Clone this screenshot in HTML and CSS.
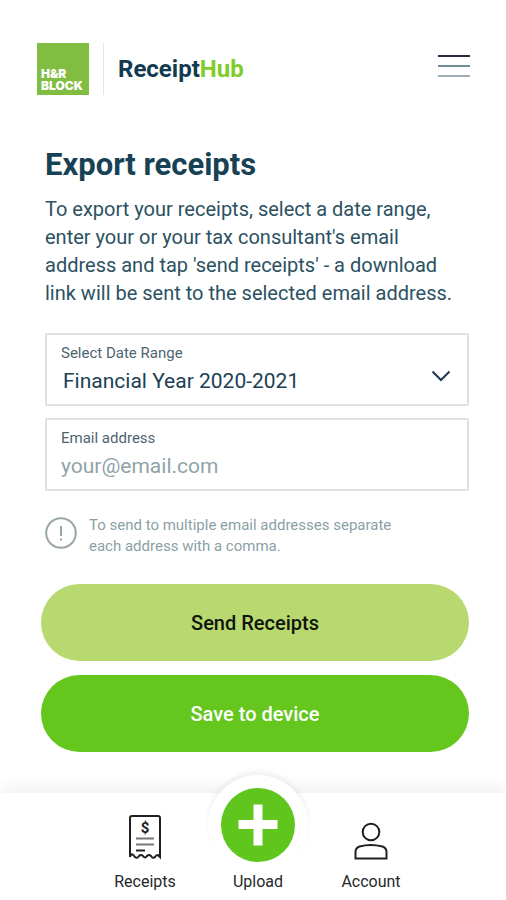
FILE: index.html
```html
<!DOCTYPE html>
<html lang="en">
<head>
<meta charset="utf-8">
<meta name="viewport" content="width=device-width, initial-scale=1">
<title>ReceiptHub – Export receipts</title>
<link rel="stylesheet" href="styles.css">
</head>
<body>
<header class="header">
  <a class="brand" href="#">
    <span class="brand-block">H&amp;R<br>BLOCK</span>
    <span class="brand-name">Receipt<span class="brand-accent">Hub</span></span>
  </a>
  <button class="menu" type="button" aria-label="Menu">
    <span class="menu-line dark"></span>
    <span class="menu-line mid"></span>
    <span class="menu-line light"></span>
  </button>
</header>

<main class="content">
  <h1 class="title">Export receipts</h1>
  <p class="intro">To export your receipts, select a date range,<br>enter your or your tax consultant's email<br>address and tap 'send receipts' - a download<br>link will be sent to the selected email address.</p>

  <form class="form">
    <div class="field">
      <label class="label" for="range">Select Date Range</label>
      <select class="control select" id="range">
        <option>Financial Year 2020-2021</option>
      </select>
      <svg class="chevron" viewBox="0 0 20 12" aria-hidden="true"><path d="M1.500 1.500 10 10l8.500-8.500"/></svg>
    </div>
    <div class="field">
      <label class="label" for="email">Email address</label>
      <input class="control" id="email" type="text" inputmode="email" placeholder="your@email.com">
    </div>
    <div class="hint">
      <svg class="hint-icon" viewBox="0 0 32 32" aria-hidden="true"><circle cx="16" cy="16" r="14.800"/><path d="M16 9v10M16 21.500v2"/></svg>
      <p class="hint-text">To send to multiple email addresses separate<br>each address with a comma.</p>
    </div>
    <div class="actions">
      <button class="button send" type="button">Send Receipts</button>
      <button class="button save" type="button">Save to device</button>
    </div>
  </form>
</main>

<nav class="nav">
  <a class="tab" href="#">
    <svg class="receipt" viewBox="0 0 34 46" aria-hidden="true">
      <path class="outline" d="M2 43V4q0-2 2-2h26q2 0 2 2v39l-2-2q-2 0-3 2-2 2-4-1-2-2-4 0-2 3-4 0-2-2-4 0-2 3-4 1-2-3-4-3z"/>
      <path class="rule" d="M8 24.500h18M8 30.500h18"/>
      <path class="outline" d="M8 36.500h9"/>
      <text class="dollar" x="17" y="18.500" text-anchor="middle">$</text>
    </svg>
    <span>Receipts</span>
  </a>
  <a class="tab upload" href="#">
    <span class="halo"></span>
    <svg class="plus" viewBox="0 0 74 74" aria-hidden="true"><circle cx="37" cy="37" r="37"/><path d="M37 16.500v41M17.500 36.500h39"/></svg>
    <span class="upload-label">Upload</span>
  </a>
  <a class="tab" href="#">
    <svg class="person" viewBox="0 0 34 38" aria-hidden="true"><circle cx="17" cy="10" r="8.300"/><path d="M1.500 36.500V30q0-4 4-5.500 11-3 23 0 4 1.500 4 5.500v6.500z"/></svg>
    <span>Account</span>
  </a>
</nav>
</body>
</html>
```
FILE: styles.css
```css
* {
  box-sizing: border-box;
}

body {
  margin: 0;
  min-height: 100vh;
  display: flex;
  flex-direction: column;
  background: #fff;
  color: #2c5162;
  font-family: Roboto, "Liberation Sans", sans-serif;
}

a {
  color: inherit;
  text-decoration: none;
}

button {
  border: 0;
  font: inherit;
  cursor: pointer;
}

.header {
  display: flex;
  align-items: center;
  justify-content: space-between;
  padding: 43px 36px 0 37px;
}

.brand {
  display: flex;
  align-items: center;
}

.brand-block {
  display: flex;
  align-items: flex-end;
  width: 52px;
  height: 52px;
  padding: 0 0 3px 4px;
  background: #80bd41;
  color: #fff;
  font: 900 12px/12px Inter, Lato, sans-serif;
}

.brand-name {
  display: flex;
  align-items: center;
  height: 52px;
  margin-left: 14px;
  padding-left: 14px;
  border-left: 1px solid #e2e5e7;
  color: #123a50;
  font-size: 24px;
  font-weight: 700;
}

.brand-accent {
  color: #80cc28;
}

.menu {
  display: flex;
  flex-direction: column;
  gap: 8px;
  width: 32px;
  padding: 0;
  margin-bottom: 6px;
  background: none;
}

.menu-line {
  height: 2px;
}

.dark {
  background: #252c42;
}

.mid {
  background: #748b98;
}

.light {
  background: #a0adb5;
}

.content {
  flex: 1;
  padding: 52px 37px 32px 45px;
}

.title {
  margin: 0;
  color: #174255;
  font-size: 31px;
  font-weight: 700;
  line-height: 36px;
}

.intro {
  margin: 12px 0 26px;
  font-size: 20px;
  line-height: 28px;
  white-space: nowrap;
}

.field {
  position: relative;
  height: 73px;
  margin-bottom: 12px;
  border: 2px solid #dfe1e2;
  border-radius: 2px;
}

.label {
  position: absolute;
  top: 8px;
  left: 14px;
  color: #4d6570;
  font-size: 15px;
  line-height: 20px;
  pointer-events: none;
}

.control {
  width: 100%;
  height: 100%;
  padding: 22px 14px 0;
  border: 0;
  background: transparent;
  color: #1b3f54;
  font: 21px Roboto, "Liberation Sans", sans-serif;
}

.control::placeholder {
  color: #8fa3a8;
  opacity: 1;
}

.select {
  padding-left: 16px;
  padding-right: 48px;
  appearance: none;
}

.chevron {
  position: absolute;
  top: 35px;
  right: 16px;
  width: 20px;
  height: 12px;
  fill: none;
  stroke: #1d3852;
  stroke-width: 2;
  pointer-events: none;
}

.hint {
  display: flex;
  gap: 12px;
  margin-top: 24px;
}

.hint-icon {
  width: 32px;
  height: 32px;
  margin-top: 2px;
  fill: none;
  stroke: #98a6aa;
  stroke-width: 2;
}

.hint-text {
  margin: 0;
  color: #8b9fa6;
  font-size: 15px;
  line-height: 21px;
}

.actions {
  display: grid;
  gap: 14px;
  margin: 27px 0 0 -4px;
}

.button {
  height: 77px;
  border-radius: 39px;
  font-size: 20px;
  font-weight: 500;
}

.send {
  background: #b7d970;
  color: #10150c;
}

.save {
  background: #65c61e;
  color: #fff;
}

.nav {
  display: flex;
  justify-content: center;
  height: 107px;
  padding-left: 10px;
  background: #fff;
  box-shadow: 0 -4px 16px rgb(0 0 0 / 7%);
  color: #26282a;
  font-size: 16px;
  line-height: 20px;
}

.tab {
  display: flex;
  flex-direction: column;
  align-items: center;
  justify-content: flex-end;
  gap: 12px;
  width: 113px;
  padding-bottom: 8px;
}

.upload {
  position: relative;
  gap: 10px;
}

.halo {
  position: absolute;
  top: -18px;
  width: 100px;
  height: 100px;
  border-radius: 50%;
  background: #fff;
  box-shadow: 0 -4px 5px rgb(0 0 0 / 6%);
}

.plus {
  position: relative;
  flex: none;
  width: 74px;
  height: 74px;
  fill: #60c61d;
}

.plus path {
  stroke: #fff;
  stroke-width: 9;
}

.upload-label {
  position: relative;
}

.receipt {
  width: 34px;
  height: 46px;
}

.outline,
.person {
  fill: none;
  stroke: #202020;
  stroke-width: 2;
}

.rule {
  stroke: #777;
  stroke-width: 2;
}

.dollar {
  fill: #202020;
  font-size: 15px;
  font-weight: 700;
}

.person {
  width: 34px;
  height: 38px;
}
```
